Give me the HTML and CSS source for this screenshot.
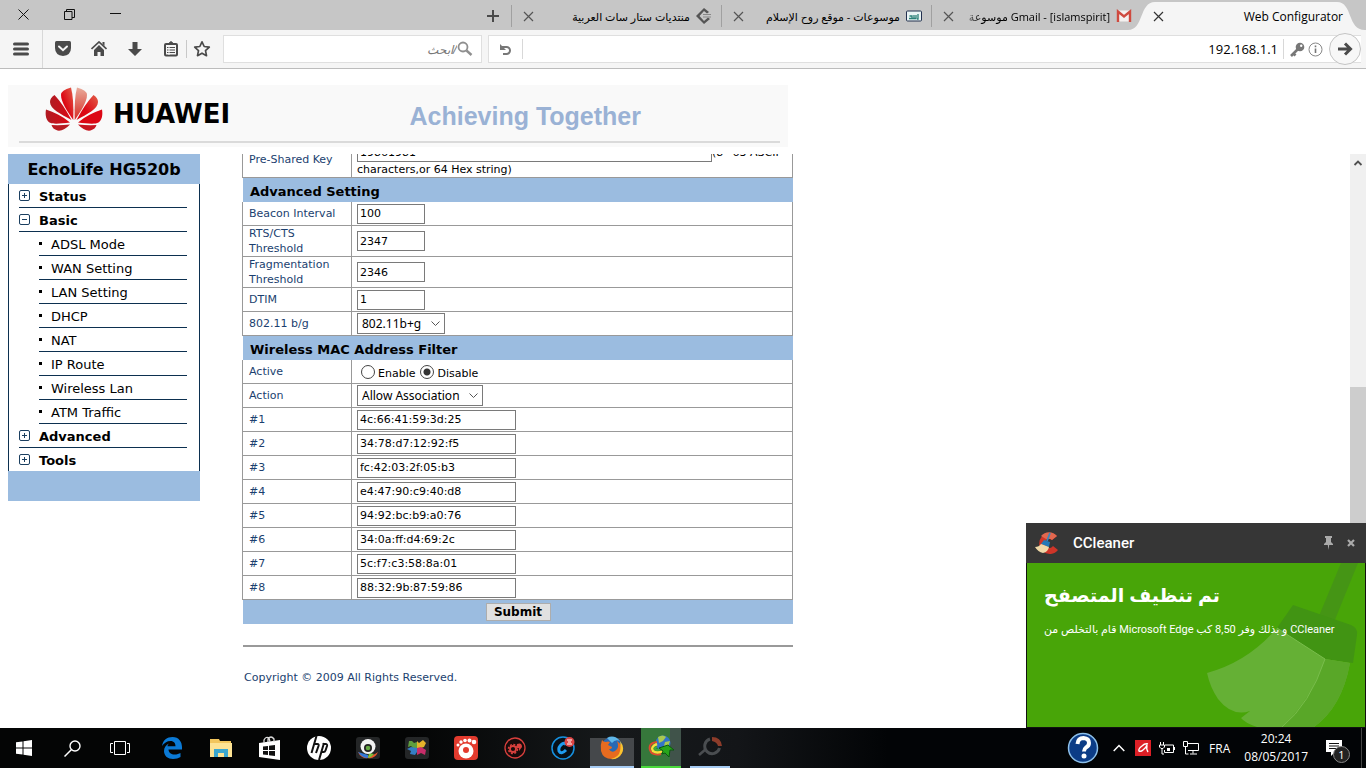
FILE: index.html
```
<!DOCTYPE html>
<html lang="en">
<head>
    <meta charset="UTF-8">
    <meta name="viewport" content="width=device-width, initial-scale=1.0">
    <title>Web Configurator</title>
    <link rel="stylesheet" href="styles.css">
</head>
<body>
    <!-- Browser tabs -->
    <div class="tabbar">
        <div class="window-buttons">
            <button aria-label="Close window"><svg width="11" height="11" viewBox="0 0 11 11"><path d="M.5.5l10 10M10.500.5l-10 10" stroke="#111" fill="none"/></svg></button>
            <button aria-label="Restore window"><svg width="11" height="11" viewBox="0 0 11 11"><path d="M.5 2.500h7.500v8H.5zM2.500 2.500V.5h8v8H8" stroke="#111" fill="none"/></svg></button>
            <button aria-label="Minimize window"><svg width="11" height="11" viewBox="0 0 11 11"><path d="M0 4.500h11" stroke="#111" fill="none"/></svg></button>
        </div>
        <button class="new-tab" aria-label="New tab"><svg width="12" height="12" viewBox="0 0 12 12"><path d="M6 0v12M0 6h12" stroke="#4a4a4a" stroke-width="2"/></svg></button>
        <div class="tab">
            <button class="tab-close" aria-label="Close tab"><svg width="11" height="11" viewBox="0 0 11 11"><path d="M1 1l9 9M10 1l-9 9" stroke="#555" stroke-width="1.200"/></svg></button>
            <span class="tab-title" dir="rtl">منتديات ستار سات العربية</span>
            <svg class="favicon" width="16" height="16" viewBox="0 0 16 16"><path d="M8 0L0 8l8 8 6-5-2-1.500L8 13 3.500 8 8 3l3 2.500L13 4z" fill="#555"/><path d="M7 6.500h8M7 9h8" stroke="#888" stroke-width="1.200"/></svg>
        </div>
        <div class="tab">
            <button class="tab-close" aria-label="Close tab"><svg width="11" height="11" viewBox="0 0 11 11"><path d="M1 1l9 9M10 1l-9 9" stroke="#555" stroke-width="1.200"/></svg></button>
            <span class="tab-title" dir="rtl">موسوعات - موقع روح الإسلام</span>
            <svg class="favicon" width="16" height="16" viewBox="0 0 16 16"><rect x=".5" y="3" width="15" height="10" rx="1" fill="#e9f4f4" stroke="#23304f"/><path d="M3 10.500h3V8H3.500M6 10.500h4V7M8 7v3M12 6v5h-1" stroke="#2a8078" fill="none" stroke-width="1.300"/></svg>
        </div>
        <div class="tab">
            <button class="tab-close" aria-label="Close tab"><svg width="11" height="11" viewBox="0 0 11 11"><path d="M1 1l9 9M10 1l-9 9" stroke="#555" stroke-width="1.200"/></svg></button>
            <span class="tab-title fade" dir="rtl"><bdi>Gmail - [islamspirit]</bdi> موسوعة</span>
            <svg class="favicon" width="16" height="16" viewBox="0 0 16 16"><path d="M1 2.500h14v11H1z" fill="#f4f0ef"/><path d="M2 14V3.500l6 5 6-5V14" stroke="#cf4a3f" stroke-width="2.400" fill="none"/></svg>
        </div>
        <div class="tab active">
            <svg class="tab-shape" viewBox="0 0 238 28" preserveAspectRatio="none"><path d="M0 28C16 28 11 0 27 0H209C225 0 219 28 237 28z" fill="#f5f5f5"/></svg>
            <button class="tab-close" aria-label="Close tab"><svg width="11" height="11" viewBox="0 0 11 11"><path d="M1 1l9 9M10 1l-9 9" stroke="#333" stroke-width="1.200"/></svg></button>
            <span class="tab-title">Web Configurator</span>
        </div>
    </div>

    <!-- Browser toolbar -->
    <div class="navbar">
        <button class="menu-button" aria-label="Menu"><svg width="16" height="14" viewBox="0 0 16 14"><path d="M1.500 2h13M1.500 7h13M1.500 12h13" stroke="#4a4a4a" stroke-width="3" stroke-linecap="round"/></svg></button>
        <div class="nav-icons">
            <button aria-label="Pocket"><svg width="18" height="18" viewBox="0 0 18 18"><path d="M1 2.500q0-1.500 1.500-1.500h13Q17 1 17 2.500V8q0 7-8 8-8-1-8-8z" fill="#4a4a4a"/><path d="M5 6.500l4 3.700 4-3.700" stroke="#f5f5f5" stroke-width="2" fill="none" stroke-linecap="round"/></svg></button>
            <button aria-label="Home"><svg width="16" height="16" viewBox="0 0 16 16"><path d="M.5 8L8 1l7.500 7" stroke="#4a4a4a" stroke-width="1.700" fill="none"/><path d="M11.500 1h2v4l-2-2zM8 4l5 5v6H9.500v-4h-3v4H3V9z" fill="#4a4a4a"/></svg></button>
            <button aria-label="Downloads"><svg width="14" height="16" viewBox="0 0 14 16"><path d="M4.500 1h5v7H14l-7 7-7-7h4.500z" fill="#4a4a4a"/></svg></button>
            <button aria-label="Bookmarks list"><svg width="16" height="16" viewBox="0 0 16 16"><rect x="2" y="3" width="12" height="11.500" rx="1" fill="none" stroke="#4a4a4a" stroke-width="2"/><path d="M5 3l3-2.500L11 3z" fill="#4a4a4a" stroke="#4a4a4a"/><path d="M4 6.500h8M4 9h8M4 11.500h8" stroke="#4a4a4a"/><path d="M6 4v10" stroke="#f5f5f5"/></svg></button>
        </div>
        <button class="star-button" aria-label="Bookmark this page"><svg width="18" height="18" viewBox="0 0 18 18"><path d="M9 1.800l2.200 4.700 5.100.6-3.800 3.500 1 5.100L9 13.200l-4.500 2.500 1-5.100L1.700 7.100l5.100-.6z" fill="none" stroke="#4a4a4a" stroke-width="1.700" stroke-linejoin="round"/></svg></button>
        <div class="search-box">
            <input type="text" dir="rtl" placeholder="&rlm;/ابحث" aria-label="Search">
            <svg width="16" height="16" viewBox="0 0 16 16"><circle cx="6" cy="6" r="4.500" fill="none" stroke="#8f8f8f" stroke-width="1.800"/><path d="M9.500 9.500l5 4.500" stroke="#8f8f8f" stroke-width="2.400"/></svg>
        </div>
        <div class="url-box">
            <button class="reload-button" aria-label="Reload"><svg width="13" height="13" viewBox="0 0 13 13"><path d="M3 4h4.500a3.500 3.500 0 1 1 0 7H4" fill="none" stroke="#777" stroke-width="2"/><path d="M1 1v6h6z" fill="#777"/></svg></button>
            <input type="text" value="192.168.1.1" aria-label="Address">
            <svg width="15" height="15" viewBox="0 0 15 15"><circle cx="10" cy="5" r="4.300" fill="#777"/><path d="M8 7l-7 7M3.500 11.500l2 2" stroke="#777" stroke-width="2.600"/><circle cx="11.200" cy="3.800" r="1.200" fill="#fff"/></svg>
            <svg width="15" height="15" viewBox="0 0 15 15"><circle cx="7.500" cy="7.500" r="6.500" fill="none" stroke="#888"/><path d="M7.500 6.500V11M7.500 3.500v1.700" stroke="#777" stroke-width="1.600"/></svg>
            <button class="go-button" aria-label="Go"><svg width="16" height="16" viewBox="0 0 16 16"><path d="M1 8h12M8 2.500L13.500 8 8 13.500" fill="none" stroke="#4a4a4a" stroke-width="3"/></svg></button>
        </div>
    </div>

    <!-- Router page -->
    <main class="page">
        <header class="banner">
            <div class="banner-inner">
                <svg width="58" height="44" viewBox="0 0 58 44">
                    <defs>
                        <linearGradient id="petal" x1="1" y1="0" x2="0" y2="1"><stop offset="0" stop-color="#e2604a"/><stop offset=".6" stop-color="#dc0714"/></linearGradient>
                        <linearGradient id="petalLight" x1="0" y1="0" x2="0" y2="1"><stop offset="0" stop-color="#e9ab9b"/><stop offset="1" stop-color="#d62a22"/></linearGradient>
                        <linearGradient id="petalDark" x1="0" y1="0" x2="1" y2="0"><stop offset="0" stop-color="#b01c24"/><stop offset="1" stop-color="#dc0714"/></linearGradient>
                    </defs>
                    <path d="M28.300 33C22 24 16 15 16 8q0-5 10-7.500Q29 12 28.300 33z" fill="url(#petal)"/>
                    <path d="M29.700 33C36 24 42 15 42 8q0-5-10-7.500Q29 12 29.700 33z" fill="url(#petalLight)"/>
                    <path d="M26.500 33C16 27 5 22 5 15q0-4 4.500-7Q18 17 26.500 33z" fill="url(#petalDark)"/>
                    <path d="M31.500 33C42 27 53 22 53 15q0-4-4.500-7Q40 17 31.500 33z" fill="url(#petal)"/>
                    <path d="M25 35.500C16 36.500 8 37.500 4.500 35.500 1 33 0 28 1 22.500 9 25 17 29 25 35.500z" fill="url(#petalDark)"/>
                    <path d="M33 35.500c9 1 17 2 20.500 0C57 33 58 28 57 22.500 49 25 41 29 33 35.500z" fill="#dc0714"/>
                    <path d="M25 37.500q-10 1-18.500.5 1 4 6 5.500 6 1 12.500-6z" fill="#b81a22"/>
                    <path d="M33 37.500q10 1 18.500.5-1 4-6 5.500-6 1-12.500-6z" fill="#c71520"/>
                </svg>
                <span class="brand">HUAWEI</span>
                <span class="slogan">Achieving Together</span>
            </div>
        </header>

        <div class="frames">
            <nav class="sidebar">
                <h1>EchoLife HG520b</h1>
                <ul class="menu">
                    <li><a href="#"><svg width="11" height="11" viewBox="0 0 11 11"><rect x=".5" y=".5" width="10" height="10" rx="1.500" fill="none" stroke="#1b3f60"/><path d="M3 5.500h5M5.500 3v5" stroke="#1b3f60"/></svg>Status</a></li>
                    <li><a href="#"><svg width="11" height="11" viewBox="0 0 11 11"><rect x=".5" y=".5" width="10" height="10" rx="1.500" fill="none" stroke="#1b3f60"/><path d="M3 5.500h5" stroke="#1b3f60"/></svg>Basic</a>
                        <ul class="submenu">
                            <li><a href="#">ADSL Mode</a></li>
                            <li><a href="#">WAN Setting</a></li>
                            <li><a href="#">LAN Setting</a></li>
                            <li><a href="#">DHCP</a></li>
                            <li><a href="#">NAT</a></li>
                            <li><a href="#">IP Route</a></li>
                            <li><a href="#">Wireless Lan</a></li>
                            <li><a href="#">ATM Traffic</a></li>
                        </ul>
                    </li>
                    <li><a href="#"><svg width="11" height="11" viewBox="0 0 11 11"><rect x=".5" y=".5" width="10" height="10" rx="1.500" fill="none" stroke="#1b3f60"/><path d="M3 5.500h5M5.500 3v5" stroke="#1b3f60"/></svg>Advanced</a></li>
                    <li><a href="#"><svg width="11" height="11" viewBox="0 0 11 11"><rect x=".5" y=".5" width="10" height="10" rx="1.500" fill="none" stroke="#1b3f60"/><path d="M3 5.500h5M5.500 3v5" stroke="#1b3f60"/></svg>Tools</a></li>
                </ul>
                <div class="sidebar-foot"></div>
            </nav>

            <section class="content">
                <form class="settings">
                    <table>
                        <tr><td><label for="psk">Pre-Shared Key</label></td><td><input class="key" type="text" id="psk" value="19861981">(8~63 ASCII characters,or 64 Hex string)</td></tr>
                        <tr><th colspan="2">Advanced Setting</th></tr>
                        <tr><td><label for="beacon">Beacon Interval</label></td><td><input class="short" type="text" id="beacon" value="100"></td></tr>
                        <tr><td><label for="rts">RTS/CTS Threshold</label></td><td><input class="short" type="text" id="rts" value="2347"></td></tr>
                        <tr><td><label for="frag">Fragmentation Threshold</label></td><td><input class="short" type="text" id="frag" value="2346"></td></tr>
                        <tr><td><label for="dtim">DTIM</label></td><td><input class="short" type="text" id="dtim" value="1"></td></tr>
                        <tr><td><label for="mode">802.11 b/g</label></td><td><select class="mode" id="mode"><option>802.11b+g</option></select></td></tr>
                        <tr><th colspan="2">Wireless MAC Address Filter</th></tr>
                        <tr><td>Active</td><td><div class="radios"><input type="radio" name="active" id="enable"><label for="enable">Enable</label><input type="radio" name="active" id="disable" checked><label for="disable">Disable</label></div></td></tr>
                        <tr><td><label for="action">Action</label></td><td><select class="action" id="action"><option>Allow Association</option></select></td></tr>
                        <tr><td><label for="mac1">#1</label></td><td><input type="text" id="mac1" value="4c:66:41:59:3d:25"></td></tr>
                        <tr><td><label for="mac2">#2</label></td><td><input type="text" id="mac2" value="34:78:d7:12:92:f5"></td></tr>
                        <tr><td><label for="mac3">#3</label></td><td><input type="text" id="mac3" value="fc:42:03:2f:05:b3"></td></tr>
                        <tr><td><label for="mac4">#4</label></td><td><input type="text" id="mac4" value="e4:47:90:c9:40:d8"></td></tr>
                        <tr><td><label for="mac5">#5</label></td><td><input type="text" id="mac5" value="94:92:bc:b9:a0:76"></td></tr>
                        <tr><td><label for="mac6">#6</label></td><td><input type="text" id="mac6" value="34:0a:ff:d4:69:2c"></td></tr>
                        <tr><td><label for="mac7">#7</label></td><td><input type="text" id="mac7" value="5c:f7:c3:58:8a:01"></td></tr>
                        <tr><td><label for="mac8">#8</label></td><td><input type="text" id="mac8" value="88:32:9b:87:59:86"></td></tr>
                        <tr><th class="actions" colspan="2"><button type="button">Submit</button></th></tr>
                    </table>
                    <hr>
                    <p class="copyright">Copyright © 2009 All Rights Reserved.</p>
                </form>
            </section>

            <div class="scrollbar">
                <svg width="16" height="18" viewBox="0 0 16 18"><path d="M4.500 11L8 7.500l3.500 3.500" fill="none" stroke="#505050" stroke-width="1.800"/></svg>
                <div class="track"></div>
                <div class="thumb"></div>
            </div>
        </div>

        <!-- CCleaner notification -->
        <aside class="toast">
            <div class="toast-head">
                <svg width="24" height="24" viewBox="0 0 24 24"><path d="M22 5A10.500 10.500 0 1 0 23 19l-5-4a4.500 4.500 0 1 1-1-6z" fill="#cf3528"/><path d="M22 5A10.500 10.500 0 0 0 6 5l5 3q4-1 6 1z" fill="#e2674e"/><path d="M15 2l-3 8" stroke="#3b87bd" stroke-width="1.800"/><path d="M9 9l6 2-1 5-8-3z" fill="#2479b8"/><path d="M6 13l8 3q-1 5-6 6-5-1-8-6 4 0 6-3z" fill="#f0d9a8"/></svg>
                <strong>CCleaner</strong>
                <button aria-label="Pin"><svg width="9" height="14" viewBox="0 0 9 14"><path d="M1 0h7v2H7v4l2 2v1H5.200L4.500 14 3.800 9H0V8l2-2V2H1z" fill="#aaa"/></svg></button>
                <button aria-label="Close notification"><svg width="8" height="8" viewBox="0 0 8 8"><path d="M1 1l6 6M7 1L1 7" stroke="#aaa" stroke-width="2.200"/></svg></button>
            </div>
            <div class="toast-body">
                <svg class="broom" width="158" height="164" viewBox="0 0 158 164">
                    <path d="M134 0h17l-24 59-15-6z" fill="#459515"/>
                    <path d="M86 42l58 20q7 3 6 10l-4 28-28-4-48-31z" fill="#419413"/>
                    <path d="M70 65l48 31 25 4q-8 44-36 64H50q-12-4-16-9l9-7q-18 6-32-12Q3 124 0 110q41-11 70-45z" fill="#65b035"/>
                    <path d="M118 96l25 4q-8 44-36 64H75q30-29 43-68z" fill="#59a728"/>
                    <path d="M70 65l48 31q-15 45-43 68" fill="none" stroke="#79bd4c"/>
                </svg>
                <h2 dir="rtl">تم تنظيف المتصفح</h2>
                <p dir="ltr">قام بالتخلص من Microsoft Edge و بذلك وفر 8,50 كب CCleaner</p>
            </div>
        </aside>
    </main>

    <!-- Windows taskbar -->
    <footer class="taskbar">
        <div class="system-apps">
            <button aria-label="Start"><svg width="16" height="16" viewBox="0 0 16 16"><path d="M0 2.300L6.500 1.400V7.500H0zM7.500 1.200L16 0v7.500H7.500zM0 8.500h6.500v6.100L0 13.700zM7.500 8.500H16V16l-8.500-1.200z" fill="#fff"/></svg></button>
            <button aria-label="Search"><svg width="17" height="17" viewBox="0 0 17 17"><circle cx="11" cy="6" r="5" fill="none" stroke="#fff" stroke-width="1.400"/><path d="M7.500 9.500L.5 16.500" stroke="#fff" stroke-width="1.500"/></svg></button>
            <button aria-label="Task view"><svg width="20" height="14" viewBox="0 0 20 14"><path d="M4.500.5h11v13h-11zM3 2.500H.5v9H3M17 2.500h2.500v9H17" fill="none" stroke="#fff"/></svg></button>
        </div>
        <div class="apps">
            <button aria-label="Edge"><svg width="20" height="22" viewBox="0 0 20 22"><path d="M0 9C1 3 5 0 10.500 0 17 0 20 5 20 10v2.500H6.500c0 3 3 5 6 5 2.500 0 4.500-.6 6-1.500V20c-2 1.200-4.500 2-7.500 2-5 0-9-3-9-8 0-3.500 2-6 5-7.500-1 1-1.300 1.700-1.500 2.700h8C13.500 6.500 12 4 8.500 4 5 4 2 6 0 9z" fill="#0b7ad6"/></svg></button>
            <button aria-label="File Explorer"><svg width="22" height="19" viewBox="0 0 22 19"><path d="M0 0h9l1 2h11v16H0z" fill="#f2c65d"/><path d="M0 4h22v14H0z" fill="#fde394"/><path d="M4 10h14v8h-4v-4H8v4H4z" fill="#3ba7cf"/></svg></button>
            <button aria-label="Store"><svg width="22" height="25" viewBox="0 0 22 25"><path d="M0 7l21-3v20L0 21z" fill="#fff"/><path d="M5 7V4q2-4 5-2l1 4M9 6V3q3-4 6 0v3" fill="none" stroke="#ddd" stroke-width="1.300"/><path d="M4 10.500l5-.6v4H4zM10 9.800l6-.8v5h-6zM4 15h5v4l-5-.6zM10 15h6v5l-6-.8z" fill="#111"/></svg></button>
            <button aria-label="HP"><svg width="24" height="24" viewBox="0 0 24 24"><circle cx="12" cy="12" r="12" fill="#fff"/><path d="M9.500 0L4.500 17M7 8h3.500q1.500 0 1 2L9 17M17 7l-5 17M15.500 8h3q2 0 1.500 2l-1.500 4.500q-.5 1.500-2 1.500h-3" fill="none" stroke="#111" stroke-width="2"/></svg></button>
            <button aria-label="Camera"><svg width="24" height="22" viewBox="0 0 24 22"><rect width="24" height="22" rx="3" fill="#242627"/><path d="M2 15q10 8 20 0-3 7-10 6-7 1-10-6z" fill="#e9592c"/><path d="M2 15q4 6 10 6v-3z" fill="#3278d8"/><path d="M12 21q4-1 6-4l-5-1z" fill="#7bc43c"/><circle cx="12" cy="9.500" r="7.500" fill="#f2f2f2"/><circle cx="12" cy="11" r="4" fill="#222"/><circle cx="12" cy="11" r="2.300" fill="#65a843"/></svg></button>
            <button aria-label="Puzzle"><svg width="24" height="22" viewBox="0 0 24 22"><rect width="24" height="22" rx="3" fill="#242627"/><path d="M4 4h3l2 2 3-1v6H8L6 9 3 10z" fill="#5f9e3e"/><path d="M12 4l2 2 4-3 3 3-2 4-3 1h-4V7z" fill="#e5b32a"/><path d="M2 12l4-2 6 1v4l-2 3-5-1 1-3z" fill="#347ec3"/><path d="M12 11l4-1 5 3-1 5-4-2-4 2z" fill="#c72d69"/></svg></button>
            <button aria-label="GOM Player"><svg width="24" height="24" viewBox="0 0 24 24"><rect width="24" height="24" rx="4" fill="#e33b2e"/><circle cx="12" cy="15" r="7.500" fill="#fff"/><circle cx="12" cy="14" r="3" fill="#e33b2e"/><g fill="#fff"><circle cx="4" cy="9" r="1.500"/><circle cx="7" cy="6" r="1.700"/><circle cx="11" cy="4.500" r="1.800"/><circle cx="15.500" cy="4.500" r="2"/><circle cx="20" cy="6" r="2.300"/></g></svg></button>
            <button aria-label="Driver tool"><svg width="22" height="22" viewBox="0 0 22 22"><circle cx="11" cy="11" r="10" fill="#180b0b" stroke="#d9403d" stroke-width="1.300"/><circle cx="9" cy="12" r="3" fill="none" stroke="#d9403d" stroke-width="1.800"/><circle cx="9" cy="12" r="4.500" fill="none" stroke="#d9403d" stroke-width="1.500" stroke-dasharray="2 1.500"/><path d="M13 7q5-2 5 3l-3 4v-3l-3 1z" fill="#d9403d"/></svg></button>
            <button aria-label="Uninstaller"><svg width="25" height="24" viewBox="0 0 25 24"><circle cx="12" cy="12" r="11" fill="#071018" stroke="#1691e0" stroke-width="1.500"/><path d="M15 9q-1-3-4-1-4 3-3 7 2 4 7-1" fill="none" stroke="#1f9cf0" stroke-width="3"/><circle cx="18.500" cy="6" r="5" fill="#dc4545"/><path d="M16 4h5M17 6h3M16 8h5" stroke="#fff"/></svg></button>
            <button class="firefox" aria-label="Firefox"><svg width="24" height="24" viewBox="0 0 24 24"><circle cx="12" cy="11.500" r="10.500" fill="#2869b4"/><path d="M7 2q7-4 13 3-5-2-8 2z" fill="#5eb6e8"/><path d="M2 4q1 2 4 2 2-1 4 0L8 9l4 2q0 2-3 2 2 4 6 2 5-3 2-10 7 5 5 12-3 6-10 6-9 0-11-8Q0 9 2 4z" fill="#e76b1f"/><path d="M20 5q5 6 2 12-4 7-11 6 8-2 9-8 1-5 0-10z" fill="#f9c42f"/></svg></button>
            <button class="idm" aria-label="Internet Download Manager"><svg width="26" height="24" viewBox="0 0 26 24"><circle cx="15" cy="8" r="7.500" fill="#3274c8"/><path d="M10 2q5-3 8 0l-3 4-4 2zM17 7l5-1-2 6-4-1z" fill="#a8c950"/><path d="M9 7Q0 8 2 15q2 6 11 4" fill="none" stroke="#e04a2f" stroke-width="2"/><path d="M9 9q-7 3-4 7 4 3 10 0" fill="none" stroke="#f6df3d" stroke-width="2.500"/><path d="M9 12q-4 1-1 3 4 0 6-1" fill="none" stroke="#3fae3a" stroke-width="2"/><path d="M11 13l9-3 6 5-4 0-1 7-4-4-3 1 1-3z" fill="#27a51b" stroke="#0c5711"/></svg></button>
            <button class="recorder" aria-label="Recorder"><svg width="24" height="20" viewBox="0 0 24 20"><path d="M12 2a7.500 7.500 0 1 0 9.500 9" fill="none" stroke="#4a4d50" stroke-width="3"/><path d="M14 0q9 0 10 9h-4q-1-4-6-5z" fill="#8d3c2a"/><path d="M8 12l-7 6" stroke="#4a4d50" stroke-width="2.500"/></svg></button>
        </div>
        <div class="tray">
            <svg width="32" height="32" viewBox="0 0 32 32"><circle cx="16" cy="16" r="14.500" fill="#0c3c86" stroke="#8dc0ea" stroke-width="1.500"/><path d="M10.500 12q.5-6 6-6 5.500.5 5.500 5 0 3-3 4.500-2 1.500-2 4" fill="none" stroke="#fff" stroke-width="4"/><circle cx="17" cy="24" r="2.500" fill="#fff"/></svg>
            <svg width="12" height="8" viewBox="0 0 12 8"><path d="M.7 7L6 1.500 11.300 7" fill="none" stroke="#fff" stroke-width="1.500"/></svg>
            <svg width="16" height="16" viewBox="0 0 16 16"><rect width="16" height="16" fill="#dc1f26"/><path d="M13 4q-3-1-6 2-4 3-3 5 2 1 4-1 3-2 4-5-1 4 1 7" fill="none" stroke="#fff" stroke-width="1.400"/></svg>
            <svg width="16" height="14" viewBox="0 0 16 14"><path d="M6 4h8.500v7.500H5.500V9" fill="none" stroke="#fff"/><path d="M15 6h1v3h-1zM8 7h3v3H8z" fill="#fff"/><path d="M1.500 1v3M4.500 1v3M.5 4h5v2L4 7.500H2L.5 6zM3 7v6h2" fill="none" stroke="#fff"/></svg>
            <svg width="16" height="14" viewBox="0 0 16 14"><path d="M5 2.500h10.500v7H5M10 9.500v3M7 13h7M.5.500h4v5h-4zM2.500 5.500V13h3" fill="none" stroke="#fff"/></svg>
            <span class="language">FRA</span>
            <div class="clock"><span>20:24</span><span>08/05/2017</span></div>
            <div class="notifications">
                <svg width="16" height="16" viewBox="0 0 16 16"><path d="M0 0h16v12H9l-4 4v-4H0z" fill="#fff"/><path d="M3 3.500h10M3 6h10M3 8.500h10" stroke="#111"/></svg>
                <span class="badge">1</span>
            </div>
        </div>
        <button class="show-desktop" aria-label="Show desktop"></button>
    </footer>
</body>
</html>
```
FILE: styles.css
```
* {
    box-sizing: border-box;
}
body {
    margin: 0;
    height: 100vh;
    display: flex;
    flex-direction: column;
    overflow: hidden;
    background-color: #fff;
    color: #000;
    font-family: "Open Sans", "DejaVu Sans", sans-serif;
    font-size: 12px;
}
button {
    margin: 0;
    padding: 0;
    border: none;
    background: none;
    font: inherit;
    color: inherit;
    display: flex;
    align-items: center;
    justify-content: center;
}
svg {
    display: block;
    flex-shrink: 0;
}
ul {
    list-style: none;
    margin: 0;
    padding: 0;
}
a {
    color: inherit;
    text-decoration: none;
}

/* tabs */
.tabbar {
    height: 30px;
    display: flex;
    background-color: #c6c6c6;
    font-size: 11px;
}
.window-buttons {
    display: flex;
    margin-right: auto;
}
.window-buttons button {
    width: 46px;
    height: 28px;
}
.new-tab {
    width: 36px;
    padding-top: 2px;
}
.tab {
    position: relative;
    width: 210px;
    display: flex;
    align-items: center;
    padding: 2px 9px 0 11px;
}
.tab::before {
    content: "";
    position: absolute;
    left: 0;
    top: 5px;
    height: 22px;
    border-left: 1px solid #a0a0a0;
}
.tab-close {
    width: 12px;
    z-index: 1;
}
.tab-title {
    flex: 1;
    margin: 0 6px 0 4px;
    white-space: nowrap;
    text-align: right;
    z-index: 1;
}
.tab-title.fade {
    -webkit-mask-image: linear-gradient(to right, transparent, #000 24px);
    mask-image: linear-gradient(to right, transparent, #000 24px);
}
.tab.active {
    width: 225px;
    padding-right: 17px;
    font-size: 12px;
}
.tab.active::before {
    display: none;
}
.tab-shape {
    position: absolute;
    left: -13px;
    top: 2px;
    width: 238px;
    height: 28px;
}

/* toolbar */
.navbar {
    height: 39px;
    display: flex;
    align-items: center;
    background-color: #f5f5f5;
    border-bottom: 1px solid #bcbcbc;
    padding-right: 5px;
}
.menu-button {
    width: 43px;
    height: 38px;
    border-right: 1px solid #d8d8d8;
}
.nav-icons {
    display: flex;
    margin-left: 2px;
    border-right: 1px solid #c8c8c8;
}
.nav-icons button {
    width: 36px;
    height: 18px;
}
.nav-icons button:last-child {
    margin-right: -3px;
}
.star-button {
    width: 30px;
    margin-right: 6px;
}
.search-box, .url-box {
    height: 28px;
    display: flex;
    align-items: center;
    background-color: #fff;
    border: 1px solid #dfdfdf;
}
.search-box {
    width: 259px;
    padding-right: 8px;
}
.search-box input, .url-box input {
    flex: 1;
    min-width: 0;
    border: none;
    background: none;
    padding: 0;
    text-align: right;
    font-family: "Open Sans", "DejaVu Sans", sans-serif;
    font-size: 13px;
    color: #000;
}
.search-box input::placeholder {
    color: #777;
    font-style: italic;
    font-size: 12px;
}
.url-box {
    flex: 1;
    margin-left: 6px;
    gap: 3px;
    border-right: none;
}
.reload-button {
    width: 34px;
    height: 20px;
    border-right: 1px solid #d8d8d8;
}
.url-box input {
    height: 20px;
    padding-right: 5px;
    margin-right: 3px;
    border-right: 1px solid #d8d8d8;
}
.go-button {
    width: 32px;
    height: 32px;
    margin-left: 3px;
    border: 1px solid #c4c4c4;
    border-radius: 16px;
    background-color: #f7f7f7;
}

/* router page */
.page {
    position: relative;
    flex: 1;
    min-height: 0;
    display: flex;
    flex-direction: column;
    padding: 16px 0 0 8px;
    font-family: "DejaVu Sans", sans-serif;
}
.banner {
    width: 780px;
    height: 62px;
    padding: 0 8px 0 11px;
    background-color: #f9f9f9;
}
.banner-inner {
    display: flex;
    align-items: center;
    height: 58px;
    padding: 0 0 8px 26px;
    border-bottom: 2px solid #dadada;
}
.brand {
    margin: 10px 0 0 10px;
    font-size: 26px;
    font-weight: bold;
}
.slogan {
    margin: 14px 139px 0 auto;
    font-family: "Liberation Sans", sans-serif;
    font-size: 25px;
    font-weight: bold;
    color: #9ab2d5;
}
.frames {
    flex: 1;
    min-height: 0;
    display: flex;
    margin-top: 7px;
}
.sidebar {
    width: 192px;
    font-size: 13px;
}
.sidebar h1 {
    margin: 0;
    padding-top: 2px;
    font-size: 16px;
    line-height: 28px;
    text-align: center;
    background-color: #9bbce0;
}
.menu {
    padding: 0 12px 0 10px;
    border: 1px solid #0c3050;
    border-width: 0 1px;
}
.menu a {
    display: flex;
    align-items: center;
    height: 24px;
    padding-top: 2px;
    border-bottom: 1px solid #0c3050;
}
.menu > li > a {
    gap: 9px;
    font-weight: bold;
}
.menu svg {
    margin-bottom: 2px;
}
.menu > li:last-child > a {
    height: 23px;
    border-bottom: none;
}
.submenu {
    padding-left: 20px;
}
.submenu a::before {
    content: "";
    width: 3px;
    height: 3px;
    margin: 0 9px 2px 0;
    background-color: #000;
}
.sidebar-foot {
    height: 30px;
    background-color: #9bbce0;
}
.content {
    flex: 1;
    overflow: hidden;
    padding-left: 42px;
}
.settings {
    width: 551px;
    margin-top: -12px;
    font-size: 11px;
    line-height: 15px;
}
.settings table {
    width: 100%;
    table-layout: fixed;
    border-collapse: separate;
    border-spacing: 0;
}
.settings td {
    height: 24px;
    padding: 0 5px 0 6px;
    border: 1px solid #999;
    border-width: 0 0 1px 1px;
    color: #1b3f6f;
}
.settings td:first-child {
    width: 109px;
}
.settings td:last-child {
    padding-left: 5px;
    border-right-width: 1px;
    color: #000;
}
.settings th {
    height: 24px;
    padding: 2px 7px 0;
    border-left: 1px solid #fff;
    background-color: #9bbce0;
    background-clip: padding-box;
    font-size: 13px;
    text-align: left;
}
.settings input[type="text"], .settings select {
    display: block;
    width: 159px;
    height: 20px;
    padding: 0 2px;
    border: 1px solid #7a7a7a;
    border-radius: 0;
    background-color: #fff;
    font-family: "DejaVu Sans", sans-serif;
    font-size: 11px;
    color: #000;
}
.settings input.short {
    width: 68px;
}
.settings input.key {
    display: inline-block;
    width: 355px;
}
.settings select {
    height: 21px;
    padding: 0 4px;
    appearance: none;
    font-family: "Noto Sans", sans-serif;
    font-size: 12px;
    background-image: url("data:image/svg+xml,%3Csvg xmlns='http://www.w3.org/2000/svg' width='9' height='6'%3E%3Cpath d='M.5.5l4 4 4-4' fill='none' stroke='%23555'/%3E%3C/svg%3E");
    background-repeat: no-repeat;
    background-position: right 4px center;
}
.settings select.mode {
    width: 88px;
}
.settings select.action {
    width: 126px;
}
.radios {
    display: flex;
    align-items: center;
    padding-left: 4px;
}
.radios input {
    appearance: none;
    width: 14px;
    height: 14px;
    margin: 0 3px 0 0;
    border: 1px solid #444;
    border-radius: 50%;
}
.radios input:checked {
    background: radial-gradient(circle, #333 0 3px, #fff 4px);
}
.radios label {
    margin-right: 5px;
    padding-top: 3px;
}
.settings .actions button {
    width: 65px;
    height: 18px;
    margin: 0 auto 2px;
    border: 1px solid #adadad;
    background-color: #e1e1e1;
    font-size: 12px;
}
.settings hr {
    height: 2px;
    margin: 21px 0 0 1px;
    border: none;
    background-color: #999;
}
.copyright {
    margin: 23px 2px;
    color: #1b3f6f;
}
.scrollbar {
    width: 16px;
    display: flex;
    flex-direction: column;
    background-color: #f0f0f0;
}
.track {
    flex: 215;
}
.thumb {
    flex: 341;
    background-color: #cdcdcd;
}

/* notification */
.toast {
    position: absolute;
    right: 0;
    bottom: 0;
    width: 340px;
    color: #fff;
    font-family: "Open Sans", "DejaVu Sans", sans-serif;
}
.toast-head {
    height: 40px;
    display: flex;
    align-items: center;
    gap: 14px;
    padding: 0 11px 0 9px;
    background-color: #363636;
}
.toast-head strong {
    flex: 1;
    font-family: Roboto, sans-serif;
    font-size: 15px;
    font-weight: 500;
}
.toast-body {
    position: relative;
    height: 165px;
    padding: 18px 0 0 17px;
    border: 1px solid #111;
    border-top: none;
    background-color: #48a508;
}
.broom {
    position: absolute;
    right: 0;
    bottom: 0;
}
.toast h2 {
    position: relative;
    width: max-content;
    margin: 0;
    font-size: 19px;
    line-height: 28px;
    white-space: nowrap;
}
.toast p {
    position: relative;
    margin: 13px 0 0;
    font-family: Roboto, "DejaVu Sans", sans-serif;
    font-size: 11px;
    line-height: 16px;
    white-space: nowrap;
}

/* taskbar */
.taskbar {
    height: 40px;
    display: flex;
    background: linear-gradient(to right, #040505 30%, #16191b 45%, #131518 54%, #020406 65%);
    color: #fff;
}
.system-apps, .apps {
    display: flex;
}
.system-apps button {
    width: 48px;
}
.apps {
    margin: 0 auto 0 3px;
}
.apps button {
    width: 49px;
}
.apps .firefox {
    width: 44px;
    margin: 10px 2px 0;
    padding-bottom: 8px;
    background-color: #45484b;
    border-bottom: 2px solid #a6cbf3;
}
.apps .idm {
    width: 40px;
    margin: 0 5px;
    background: linear-gradient(to right, #36773b 29px, #40534a 29px);
    border-bottom: 2px solid #4ada3c;
}
.apps .recorder {
    width: 40px;
    margin-left: 4px;
    border-bottom: 2px solid #a6cbf3;
}
.tray {
    display: flex;
    align-items: center;
    padding-right: 19px;
}
.tray > svg {
    margin-right: 8px;
}
.tray > svg:first-child {
    margin-right: 14px;
}
.tray > svg:nth-child(2) {
    margin-right: 10px;
}
.language {
    margin: 0 14px 0 2px;
}
.clock {
    display: flex;
    flex-direction: column;
    text-align: center;
    line-height: 18px;
    margin-right: 18px;
}
.notifications {
    position: relative;
}
.badge {
    position: absolute;
    left: 7px;
    top: 6px;
    width: 17px;
    height: 17px;
    border: 1px solid #888;
    border-radius: 50%;
    background-color: #222;
    font-size: 11px;
    line-height: 15px;
    text-align: center;
}
.show-desktop {
    width: 5px;
    border-left: 1px solid #444;
}
```
